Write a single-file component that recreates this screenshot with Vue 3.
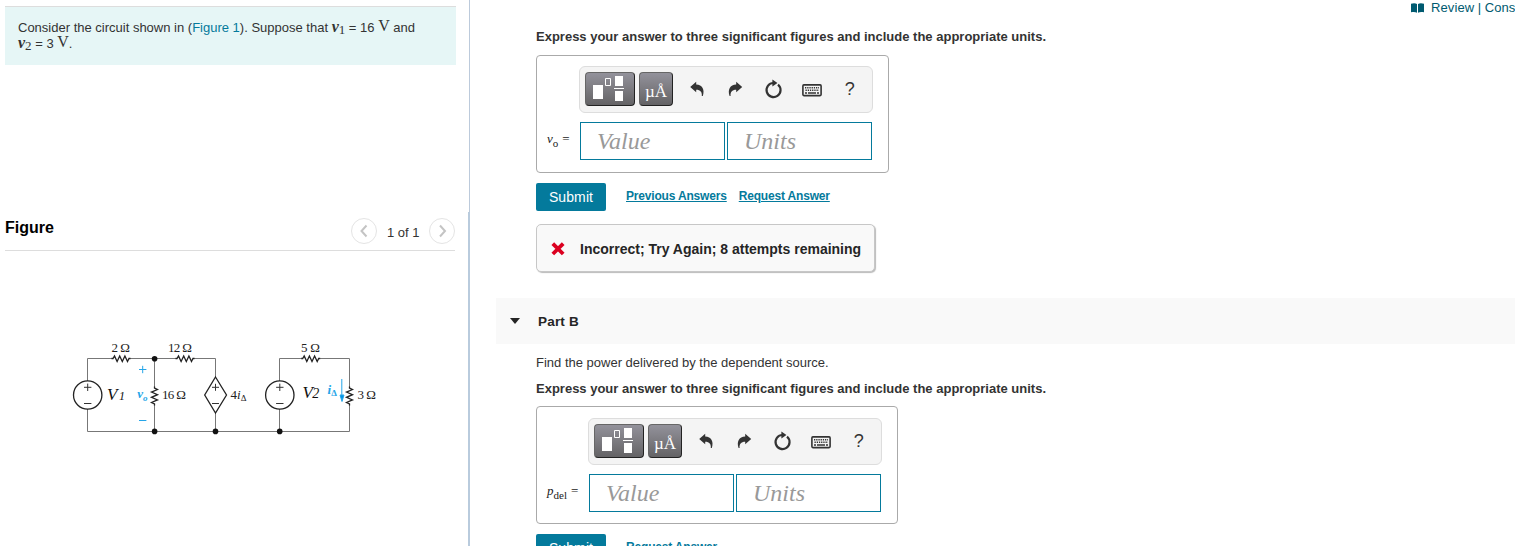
<script setup>
const parts = [
  {
    id: 'a',
    symbol: 'v',
    subscript: 'o',
    links: ['Previous Answers', 'Request Answer'],
    feedback: 'Incorrect; Try Again; 8 attempts remaining',
  },
  {
    id: 'b',
    title: 'Part B',
    question: 'Find the power delivered by the dependent source.',
    symbol: 'p',
    subscript: 'del',
    links: ['Request Answer'],
  },
]
</script>

<template>
  <div class="page">
    <aside class="sidebar">
      <div class="sidebar-top">
        <div class="problem">
          Consider the circuit shown in (<a class="figure-link">Figure 1</a>). Suppose that
          <span class="math"><i>v</i><sub>1</sub></span> = 16 <span class="unit">V</span> and<br />
          <span class="math"><i>v</i><sub>2</sub></span> = 3 <span class="unit">V</span>.
        </div>
      </div>

      <div class="figure-panel">
        <div class="figure-header">
          <h2 class="figure-title">Figure</h2>
          <div class="pager">
            <button class="pager-btn">
              <svg width="24" height="24" viewBox="0 0 24 24"><path d="M14.5 6.5 L9.5 12 L14.5 17.5" /></svg>
            </button>
            <span class="pager-text">1 of 1</span>
            <button class="pager-btn">
              <svg width="24" height="24" viewBox="0 0 24 24"><path d="M10 6.5 L15 12 L10 17.5" /></svg>
            </button>
          </div>
        </div>

        <svg class="circuit" width="340" height="105" viewBox="60 335 340 105">
          <!-- wires -->
          <g class="wire">
            <path d="M87.5 381V358.5H112M130 358.5H176M194 358.5H215.5V377" />
            <path d="M87.5 409V431.5H349.5V405M154.5 358.5V387M154.5 405V431.5M215.5 413V431.5" />
            <path d="M279.5 381V358.5H301.5M320 358.5H349.5V387M279.5 409V431.5" />
          </g>
          <!-- resistors -->
          <g class="part">
            <path d="M111.5 358.5l1.5 0 1.5 -2.5 2.6 5.5 2.6 -5.5 2.6 5.5 2.6 -5.5 2.6 5.5 1.5 -3 1.5 0" />
            <path d="M175.5 358.5l1.5 0 1.5 -2.5 2.6 5.5 2.6 -5.5 2.6 5.5 2.6 -5.5 2.6 5.5 1.5 -3 1.5 0" />
            <path d="M301.2 358.5l1.5 0 1.5 -2.5 2.6 5.5 2.6 -5.5 2.6 5.5 2.6 -5.5 2.6 5.5 1.5 -3 1.5 0" />
            <path d="M154.5 386.5l0 1.5 3 1.5 -6 2.6 6 2.6 -6 2.6 6 2.6 -6 2.6 3 1.5 0 1.5" />
            <path d="M349.5 386.5l0 1.5 3 1.5 -6 2.6 6 2.6 -6 2.6 6 2.6 -6 2.6 3 1.5 0 1.5" />
          </g>
          <!-- sources -->
          <g class="part">
            <circle cx="87.7" cy="395" r="14.2" />
            <circle cx="279.8" cy="395" r="14.2" />
            <path d="M215.5 377L226.5 395L215.5 413L204.7 395Z" />
          </g>
          <g class="sign">
            <path d="M84 387.3h7.4M87.7 383.6v7.4M84 403.5h7.4" />
            <path d="M276.1 387.3h7.4M279.8 383.6v7.4M276.1 403.5h7.4" />
            <path d="M212 387.3h7M215.5 383.8v7M212 403.5h7" />
          </g>
          <g class="dot">
            <circle cx="154.6" cy="358.7" r="2.8" />
            <circle cx="154.6" cy="431.4" r="2.8" />
            <circle cx="215.5" cy="431.4" r="2.8" />
            <circle cx="279.7" cy="431.4" r="2.8" />
          </g>
          <g class="blue-line">
            <path d="M139 369.5h7.4M142.7 365.8v7.4M139 420.5h7.4M341.8 379v17" />
            <path class="arrow-head" d="M340 395h4l-2 6.5z" />
          </g>
          <g class="value">
            <text x="111.5" y="352" textLength="18.5">2 Ω</text>
            <text x="168" y="352" textLength="24">12 Ω</text>
            <text x="301" y="352" textLength="19">5 Ω</text>
            <text x="162" y="399" textLength="24">16 Ω</text>
            <text x="357.5" y="399" textLength="18.5">3 Ω</text>
            <text x="230.5" y="398.5">4<tspan class="it">i</tspan><tspan class="small" dy="2">Δ</tspan></text>
          </g>
          <g class="source-name">
            <text x="107" y="400">V<tspan x="119" class="one">1</tspan></text>
            <text x="302.5" y="398">V<tspan x="312.3" class="two">2</tspan></text>
          </g>
          <g class="blue-text">
            <text x="137.3" y="398">v<tspan class="small" dy="3">o</tspan></text>
            <text x="327.5" y="393.5">i<tspan class="small up" dy="2">Δ</tspan></text>
          </g>
        </svg>
      </div>
    </aside>

    <main class="content">
      <div class="top-links">
        <svg width="13" height="10" viewBox="0 0 13 10">
          <path d="M0 .8C2 0 4.5 0 6 .9V9.7C4.5 8.7 2 8.7 0 9.3ZM7 .9C8.5 0 11 0 13 .8V9.3C11 8.7 8.5 8.7 7 9.7Z" />
        </svg>
        <span>Review</span><span class="divider">|</span><span>Cons</span>
      </div>

      <section v-for="part in parts" :key="part.id" :class="['part-section', 'part-' + part.id]">
        <header v-if="part.title" class="part-header">
          <span class="caret"></span>
          <h3>{{ part.title }}</h3>
        </header>

        <div class="part-body">
          <p v-if="part.question" class="question">{{ part.question }}</p>
          <p class="instruction">
            Express your answer to three significant figures and include the appropriate units.
          </p>

          <div class="answer-box">
            <div class="toolbar">
              <button class="tool tool-wide">
                <svg width="50" height="34" viewBox="0 0 50 34">
                  <path class="fill" d="M8 13h10v14H8zM30 4h8v10h-8zM30 19h8v10h-8zM29 16h10v1H29z" />
                  <path class="line" d="M20.5 6.5h5v7h-5z" />
                </svg>
              </button>
              <button class="tool">µÅ</button>
              <button class="icon-btn">
                <svg width="16" height="16" viewBox="0 0 16 16">
                  <path d="M1.2 6L7.2 .7V3.4C13.4 3.6 16 8.6 13.8 15H12.8C13.2 11.2 11.4 8.8 7.2 8.8V11.3Z" />
                </svg>
              </button>
              <button class="icon-btn">
                <svg width="16" height="16" viewBox="0 0 16 16">
                  <path d="M15.2 6L9.2 .7V3.4C3 3.6 .4 8.6 2.6 15H3.6C3.2 11.2 5 8.8 9.2 8.8V11.3Z" />
                </svg>
              </button>
              <button class="icon-btn">
                <svg width="18" height="20" viewBox="0 0 18 20">
                  <path class="ring" d="M14 5.6A7 7 0 1 1 9.5 4" />
                  <path d="M8.4 .4L13.4 4L8.4 7.6Z" />
                </svg>
              </button>
              <button class="icon-btn keyboard">
                <svg width="20" height="13" viewBox="0 0 20 13">
                  <rect class="case" x=".9" y=".9" width="18.2" height="10.7" rx="1" />
                  <path class="keys" d="M3 3.7H17M3.5 6.2H17" />
                  <path class="space" d="M3 9H5M6 9H14M15 9H17" />
                </svg>
              </button>
              <button class="icon-btn help">?</button>
            </div>

            <div class="answer-row">
              <label class="answer-label">
                <i>{{ part.symbol }}</i><sub>{{ part.subscript }}</sub><span class="equals">=</span>
              </label>
              <div class="field">Value</div>
              <div class="field">Units</div>
            </div>
          </div>

          <div class="actions">
            <button class="submit">Submit</button>
            <a v-for="link in part.links" :key="link" class="action-link">{{ link }}</a>
          </div>

          <div v-if="part.feedback" class="feedback">
            <svg width="14" height="14" viewBox="0 0 14 14">
              <path d="M1.8 1.6L12.2 12M12.2 1.6L1.8 12" />
            </svg>
            <span>{{ part.feedback }}</span>
          </div>
        </div>
      </section>
    </main>
  </div>
</template>

<style>
body {
  margin: 0;
  background: #fff;
}
</style>

<style scoped>
.page {
  display: grid;
  grid-template-columns: 470px 1fr;
  width: 1515px;
  height: 546px;
  overflow: hidden;
  font-family: "Liberation Sans", Arial, sans-serif;
  font-size: 13px;
  color: #333;
}

button {
  padding: 0;
  border: none;
  background: none;
  font-family: inherit;
}

/* Sidebar */
.sidebar {
  display: flex;
  flex-direction: column;
}

.sidebar-top {
  box-sizing: border-box;
  height: 212px;
  padding: 6px 13px 0 5px;
  border-right: 1px solid #bccadb;
}

.problem {
  box-sizing: border-box;
  height: 59px;
  padding: 13px 0 0 13px;
  border-top: 1px solid #ddd;
  background: #e6f6f6;
  line-height: 16px;
  white-space: nowrap;
}

.figure-link {
  color: #047a9c;
}

.math,
.unit {
  font-family: "Liberation Serif", serif;
  line-height: 0;
}

.math {
  font-size: 16px;
}

.math i {
  font-weight: bold;
}

.math sub {
  font-size: 13px;
  line-height: 0;
  vertical-align: -2px;
}

.unit {
  font-size: 16px;
  vertical-align: 1px;
}

.figure-panel {
  flex: 1;
  padding: 0 13px 0 5px;
  border-right: 2px solid #b9cbdd;
}

.figure-header {
  display: flex;
  justify-content: space-between;
  align-items: center;
  height: 38px;
  border-bottom: 1px solid #ddd;
}

.figure-title {
  margin: 0 0 7px;
  font-size: 16px;
  color: #000;
}

.pager {
  display: flex;
  align-items: center;
  gap: 10px;
}

.pager-btn {
  width: 26px;
  height: 26px;
  border: 1px solid #e4e4e4;
  border-radius: 50%;
}

.pager-btn svg {
  display: block;
  fill: none;
  stroke: #c4c4c4;
  stroke-width: 2;
}

.pager-text {
  width: 32px;
  padding-top: 3px;
  white-space: nowrap;
}

/* Circuit */
.circuit {
  display: block;
  margin: 84px 0 0 55px;
  font-family: "Liberation Serif", serif;
}

.wire {
  fill: none;
  stroke: #777;
}

.part {
  fill: none;
  stroke: #222;
  stroke-width: 1.3;
}

.sign {
  stroke: #333;
  stroke-width: 1;
}

.dot {
  fill: #111;
}

.blue-line {
  stroke: #25a5e8;
  stroke-width: 1;
}

.arrow-head {
  fill: #0095e8;
}

.value {
  font-size: 13px;
  fill: #222;
}

.it {
  font-style: italic;
}

.small {
  font-size: 9px;
}

.source-name {
  font-size: 17px;
  font-style: italic;
  fill: #111;
}

.one {
  font-size: 12px;
}

.two {
  font-size: 14px;
}

.blue-text {
  font-size: 13px;
  font-style: italic;
  font-weight: bold;
  fill: #25a5e8;
}

.up {
  font-style: normal;
}

/* Main content */
.content {
  min-width: 0;
  padding-left: 26px;
}

.top-links {
  display: flex;
  align-items: center;
  height: 15px;
  padding-left: 915px;
  color: #005a70;
  letter-spacing: 0.1px;
  white-space: nowrap;
  overflow: hidden;
}

.top-links svg {
  flex: none;
  margin-right: 7px;
  fill: #005a70;
}

.divider {
  margin: 0 3.5px;
}

.part-body {
  display: flex;
  flex-direction: column;
  align-items: flex-start;
  padding-left: 40px;
}

.part-a .part-body {
  padding-top: 14px;
}

.part-b {
  margin-top: 26px;
}

.part-header {
  display: flex;
  align-items: center;
  height: 46px;
  padding-left: 14px;
  margin-bottom: 11px;
  background: #f9f9f9;
}

.caret {
  width: 0;
  height: 0;
  margin-right: 18px;
  border: 5px solid transparent;
  border-top: 6px solid #252525;
  border-bottom: none;
}

.part-header h3 {
  margin: 0;
  font-size: 13.5px;
  color: #252525;
  letter-spacing: 0.2px;
}

.question,
.instruction {
  margin: 0;
  height: 16px;
  line-height: 16px;
  white-space: nowrap;
}

.question {
  margin-bottom: 10px;
}

.instruction {
  margin-bottom: 10px;
  font-weight: bold;
}

.answer-box {
  display: flex;
  flex-direction: column;
  align-items: flex-end;
  box-sizing: border-box;
  width: 353px;
  height: 118px;
  padding: 10px 16px 0 0;
  border: 1px solid #aaa;
  border-radius: 4px;
}

.part-b .answer-box {
  width: 362px;
  padding-top: 11px;
}

.part-b .instruction {
  margin-bottom: 9px;
}

.toolbar {
  display: flex;
  align-items: center;
  box-sizing: border-box;
  width: 294px;
  height: 47px;
  margin-right: -1px;
  padding-left: 5px;
  border: 1px solid #ddd;
  border-radius: 6px;
  background: #f4f4f4;
}

.tool {
  display: flex;
  align-items: center;
  justify-content: center;
  box-sizing: border-box;
  width: 34px;
  height: 34px;
  padding-top: 6px;
  margin: 0 5px 2px 0;
  border: 1px solid #666;
  border-right-color: #222;
  border-bottom-color: #222;
  border-radius: 4px;
  background: linear-gradient(#93929b, #646365);
  color: #fff;
  font-family: "Liberation Serif", serif;
  font-size: 17px;
}

.tool-wide {
  width: 50px;
  padding: 0;
  margin-right: 4px;
}

.tool-wide svg {
  flex: none;
}

.fill {
  fill: #fff;
}

.line {
  fill: none;
  stroke: #fff;
}

.icon-btn {
  display: flex;
  align-items: center;
  justify-content: center;
  width: 38.2px;
  height: 34px;
  margin-bottom: 2px;
  color: #333;
}

.icon-btn svg {
  fill: #333;
}

.icon-btn .ring {
  fill: none;
  stroke: #333;
  stroke-width: 2.2;
}

.keyboard {
  padding-top: 4px;
}

.keyboard .case {
  fill: none;
  stroke: #333;
  stroke-width: 1.6;
}

.keys {
  stroke: #333;
  stroke-width: 1.4;
  stroke-dasharray: 1.3 0.9;
}

.space {
  stroke: #333;
  stroke-width: 1.3;
}

.help {
  padding-top: 2px;
  font-size: 18px;
}

.answer-row {
  display: flex;
  gap: 2px;
  margin-top: 9px;
}

.answer-label {
  width: 31px;
  padding-top: 9px;
  font-family: "Liberation Serif", serif;
  font-size: 13px;
  line-height: 16px;
  color: #222;
  white-space: nowrap;
}

.part-b .answer-label {
  width: 40px;
}

.answer-label sub {
  font-size: 11px;
  line-height: 0;
  vertical-align: -4px;
}

.equals {
  margin-left: 4px;
}

.field {
  box-sizing: border-box;
  width: 145px;
  height: 38px;
  padding-left: 16px;
  border: 1px solid #047a9c;
  font-family: "Liberation Serif", serif;
  font-size: 24px;
  font-style: italic;
  line-height: 36px;
  color: #999;
}

.actions {
  display: flex;
  align-items: flex-start;
  margin-top: 10px;
}

.submit {
  width: 70px;
  height: 28px;
  margin-right: 20px;
  border-radius: 2px;
  background: #047a9c;
  color: #fff;
  font-size: 14px;
  letter-spacing: 0.1px;
}

.action-link {
  margin-right: 12px;
  padding-top: 5px;
  font-size: 12px;
  font-weight: bold;
  line-height: 16px;
  letter-spacing: -0.18px;
  color: #047a9c;
  text-decoration: underline;
  white-space: nowrap;
}

.feedback {
  display: flex;
  align-items: center;
  box-sizing: border-box;
  width: 339px;
  height: 48px;
  margin-top: 13px;
  padding: 2px 0 0 14px;
  border: 1px solid #c7c7c7;
  border-radius: 5px;
  background: #f9f9f9;
  box-shadow: 1px 1px 1px #bbb;
  font-size: 14px;
  font-weight: bold;
  color: #252525;
  white-space: nowrap;
}

.feedback svg {
  margin-right: 15px;
  fill: none;
  stroke: #db0020;
  stroke-width: 3.8;
}
</style>
